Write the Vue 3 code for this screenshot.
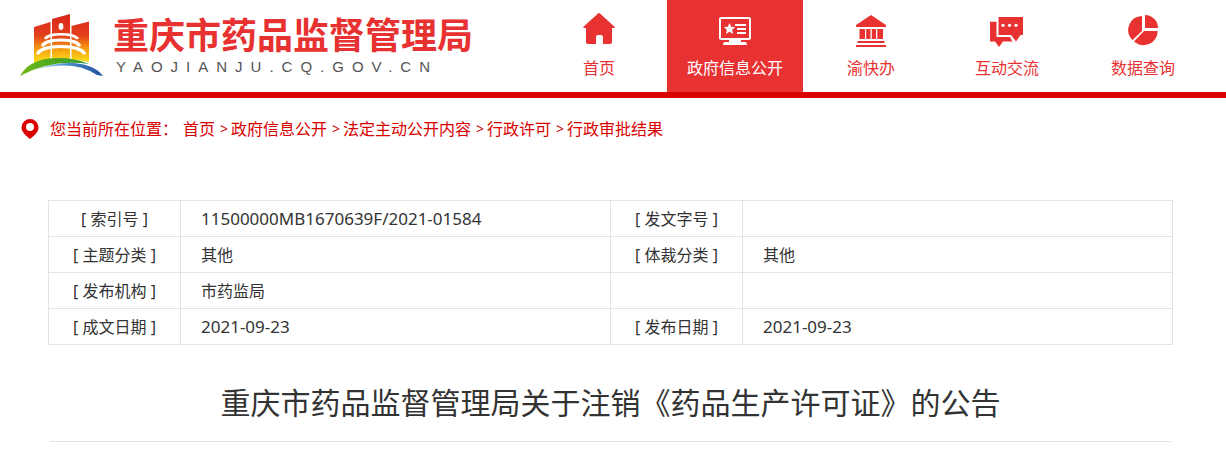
<script setup>
const navItems = [
  { label: '首页', icon: 'home' },
  { label: '政府信息公开', icon: 'screen', active: true },
  { label: '渝快办', icon: 'hall' },
  { label: '互动交流', icon: 'chat' },
  { label: '数据查询', icon: 'pie' },
]

const crumbs = ['首页', '政府信息公开', '法定主动公开内容', '行政许可', '行政审批结果']

const rows = [
  [
    { label: '[ 索引号 ]', value: '11500000MB1670639F/2021-01584', numeric: true },
    { label: '[ 发文字号 ]', value: '' },
  ],
  [
    { label: '[ 主题分类 ]', value: '其他' },
    { label: '[ 体裁分类 ]', value: '其他' },
  ],
  [
    { label: '[ 发布机构 ]', value: '市药监局' },
    { label: '', value: '' },
  ],
  [
    { label: '[ 成文日期 ]', value: '2021-09-23', numeric: true },
    { label: '[ 发布日期 ]', value: '2021-09-23', numeric: true },
  ],
]
</script>

<template>
  <div class="page">
    <header class="header">
      <a class="brand" href="#">
        <svg class="emblem" viewBox="0 0 84 63" aria-hidden="true">
          <defs>
            <linearGradient id="tower" gradientUnits="userSpaceOnUse" x1="0" y1="0" x2="0" y2="48">
              <stop offset="0" stop-color="#d8261c" />
              <stop offset="0.45" stop-color="#e3401c" />
              <stop offset="0.72" stop-color="#f59a10" />
              <stop offset="1" stop-color="#fde01a" />
            </linearGradient>
            <linearGradient id="hill" x1="0" y1="0" x2="1" y2="0">
              <stop offset="0" stop-color="#6fb81c" />
              <stop offset="0.5" stop-color="#4fa81e" />
              <stop offset="1" stop-color="#2f9a3c" />
            </linearGradient>
            <linearGradient id="river" x1="0" y1="0" x2="1" y2="0">
              <stop offset="0" stop-color="#a8d8f2" />
              <stop offset="0.45" stop-color="#4a90cf" />
              <stop offset="1" stop-color="#1f4f9c" />
            </linearGradient>
          </defs>
          <path fill="url(#tower)" d="M14 13 30.500 8v39q-9 1-16.500 5zM32 5 50 0v46q-9-1-18 1zM51.500 12 69 7.500V48q-8-2-17.500-2z" />
          <ellipse cx="41" cy="12.500" rx="2.400" ry="3.400" fill="#fff" />
          <g fill="#fff">
            <path d="M24 24q3-5 17-5t18 5q-1 2-3 1-4-3.500-15-3.500t-14 3.500q-2 1-3-1z" />
            <path d="M21 31q3-6.500 20-6.500T61 31q0 2-3 1.500-4-5-17-5t-17 5q-3 .500-3-1.500z" />
            <path d="M16 39q4-8 25-8t25 8q0 2-3 1.500-5-6.500-22-6.500t-22 6.500q-3 .500-3-1.500z" />
          </g>
          <path fill="url(#hill)" d="M0 62Q8 47 29 44.500q22-2 40 5.500Q31 45 0 62z" />
          <path fill="url(#river)" d="M15 56q20-8 39-7 21 2 29 13l-6-1Q53 45 15 56z" />
        </svg>
        <span class="brand-text">
          <span class="brand-name">重庆市药品监督管理局</span>
          <span class="brand-domain">YAOJIANJU.CQ.GOV.CN</span>
        </span>
      </a>

      <nav class="nav">
        <a v-for="item in navItems" :key="item.label" href="#" class="nav-item" :class="{ active: item.active }">
          <svg v-if="item.icon === 'home'" class="nav-icon" viewBox="0 0 36 36" fill="currentColor">
            <path d="M17 2.500q1-1 2 0l14.500 13.300q1 1.200-.500 1.200h-2v14q0 2-2 2h-7v-7q0-2-2-2h-3q-2 0-2 2v7H7q-2 0-2-2V17H3q-1.500 0-.500-1.200z" />
          </svg>
          <svg v-else-if="item.icon === 'screen'" class="nav-icon" viewBox="0 0 36 36" fill="currentColor">
            <path fill-rule="evenodd" d="M4 6h28q2 0 2 2v19q0 2-2 2h-8v2h4q2 0 2 3H6q0-3 2-3h4v-2H4q-2 0-2-2V8q0-2 2-2zm0 2v19h28V8z" />
            <path d="m12.500 12 1.700 3.700 4 .4-3 2.700.9 4.200-3.600-2.200L9 23l.8-4.200-3-2.700 4-.4z" />
            <path d="M18 13h11v2H18zM20 17h9v2h-9zM20 21h9v2h-9z" />
          </svg>
          <svg v-else-if="item.icon === 'hall'" class="nav-icon" viewBox="0 0 36 36" fill="currentColor">
            <path d="M18 4 33 14v2H3v-2zM6.500 18H12v10H6.500zM13.200 18h4.300v10h-4.300zM18.800 18H23v10h-4.200zM24.300 18H30v10h-5.700zM4.500 30h27v2h-27zM3 34h30v2H3z" />
          </svg>
          <svg v-else-if="item.icon === 'chat'" class="nav-icon" viewBox="0 0 36 36" fill="currentColor">
            <path d="M9.500 6H34v18h-2.500l-4.500 6.600-5-6.600H9.500z" />
            <path d="M1 10.700h6.500V26H21l2.500 4.500H14L10 36l-4-5.500H1z" />
            <g fill="#fff">
              <circle cx="14" cy="14.300" r="1.600" />
              <circle cx="20.500" cy="14.300" r="1.600" />
              <circle cx="27" cy="14.300" r="1.600" />
            </g>
          </svg>
          <svg v-else class="nav-icon" viewBox="0 0 36 36" fill="currentColor">
            <path d="M20 4a13 13 0 0 1 13 13H20zM17 5v15L7.500 29A14 14 0 0 1 17 5zM19 20h13.500A14 13 0 0 1 9 30.500z" />
          </svg>
          <span>{{ item.label }}</span>
        </a>
      </nav>
    </header>

    <nav class="breadcrumb" aria-label="您当前所在位置">
      <svg class="pin" viewBox="0 0 18 20" aria-hidden="true">
        <path fill="#d90000" fill-rule="evenodd" d="M9 0a8.500 8.500 0 0 1 8.500 8.500C17.500 13 13 17 9 20 5 17 .500 13 .500 8.500A8.500 8.500 0 0 1 9 0zm0 4a4 4 0 1 0 0 8 4 4 0 0 0 0-8z" />
      </svg>
      <span class="here">您当前所在位置：</span>
      <template v-for="(crumb, i) in crumbs" :key="crumb">
        <span v-if="i" class="sep">&gt;</span>
        <a href="#">{{ crumb }}</a>
      </template>
    </nav>

    <main class="content">
      <table class="meta">
        <colgroup>
          <col class="col-label" />
          <col />
          <col class="col-label" />
          <col />
        </colgroup>
        <tbody>
          <tr v-for="(row, r) in rows" :key="r">
            <template v-for="(cell, c) in row" :key="c">
              <th scope="row">{{ cell.label }}</th>
              <td :class="{ numeric: cell.numeric }">{{ cell.value }}</td>
            </template>
          </tr>
        </tbody>
      </table>
      <h1 class="title">重庆市药品监督管理局关于注销《药品生产许可证》的公告</h1>
    </main>
  </div>
</template>

<style>
body {
  background: #fff;
}
</style>

<style scoped>
.page {
  font-family: "Noto Sans", "Noto Sans CJK SC", sans-serif;
  font-size: 16px;
  line-height: 24px;
  color: #333;
}

a {
  color: inherit;
  text-decoration: none;
}

.header {
  display: flex;
  justify-content: space-between;
  padding: 0 15px 0 20px;
  border-bottom: 6px solid #d90000;
}

.brand {
  display: flex;
  align-items: flex-start;
  gap: 9px;
}

.emblem {
  width: 84px;
  height: 63px;
  margin-top: 14px;
}

.brand-text {
  display: flex;
  flex-direction: column;
  padding-top: 7px;
  white-space: nowrap;
}

.brand-name {
  font-family: "Noto Sans CJK SC", sans-serif;
  font-size: 36px;
  font-weight: 700;
  line-height: 52px;
  color: #e83232;
}

.brand-domain {
  padding-left: 3px;
  font-family: "Liberation Sans", Arial, sans-serif;
  font-size: 15px;
  line-height: 16px;
  letter-spacing: 8px;
  color: #555;
}

.nav {
  display: flex;
}

.nav-item {
  display: flex;
  flex-direction: column;
  align-items: center;
  gap: 9px;
  width: 136px;
  height: 81px;
  padding-top: 11px;
  color: #e83232;
  white-space: nowrap;
}

.nav-item.active {
  background: #e83232;
  color: #fff;
}

.nav-icon {
  width: 36px;
  height: 36px;
}

.breadcrumb {
  display: flex;
  align-items: center;
  padding: 19px 21px 0;
  color: #d90000;
}

.pin {
  width: 18px;
  height: 20px;
  margin-right: 11px;
}

.here {
  margin-right: 5px;
}

.sep {
  width: 11px;
  margin-left: 5px;
  font-size: 14px;
}

.content {
  padding: 59px 53px 0 48px;
}

.meta {
  width: 100%;
  table-layout: fixed;
  border-collapse: collapse;
}

.col-label {
  width: 132px;
}

.meta th,
.meta td {
  height: 35px;
  padding: 0;
  border: 1px solid #e3e3e3;
  font-weight: 400;
}

.meta th {
  text-align: center;
}

.meta td {
  padding-left: 20px;
}

.meta .numeric {
  font-size: 17px;
}

.title {
  margin: 36px 2px 0;
  padding-bottom: 16px;
  border-bottom: 1px solid #e3e3e3;
  font-size: 30px;
  font-weight: 400;
  line-height: 44px;
  text-align: center;
}
</style>
